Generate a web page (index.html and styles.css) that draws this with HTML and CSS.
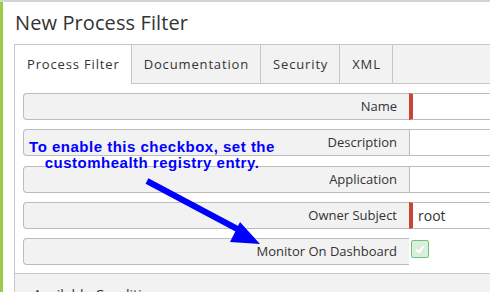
FILE: index.html
```html
<!DOCTYPE html>
<html lang="en">
  <head>
    <meta charset="UTF-8" />
    <title>New Process Filter</title>
    <link rel="stylesheet" href="styles.css">
  </head>
  <body>
    <div class="main">
      <h1 class="title">New Process Filter</h1>

      <div class="panel">
        <div class="tabs">
          <div class="tab active">Process Filter</div>
          <div class="tab">Documentation</div>
          <div class="tab">Security</div>
          <div class="tab">XML</div>
        </div>

        <div class="form">
          <div class="row">
            <div class="label">Name</div>
            <div class="field required"></div>
          </div>
          <div class="row">
            <div class="label">Description</div>
            <div class="field"></div>
          </div>
          <div class="row">
            <div class="label">Application</div>
            <div class="field"></div>
          </div>
          <div class="row">
            <div class="label">Owner Subject</div>
            <div class="field required">root</div>
          </div>
          <div class="row">
            <div class="label">Monitor On Dashboard</div>
            <div class="check-cell">
              <span class="checkbox">
                <svg width="12" height="12" viewBox="0 0 12 12">
                  <path d="M2 6.5 L5 9 L10 3" fill="none" stroke="#fff" stroke-width="2" />
                </svg>
              </span>
            </div>
          </div>
        </div>

        <div class="conditions">Available Conditions</div>
      </div>
    </div>

    <!-- annotation drawn over the screenshot -->
    <div class="note">To enable this checkbox, set the<br />customhealth registry entry.</div>
    <svg class="arrow" width="490" height="292" viewBox="0 0 490 292">
      <line x1="147" y1="181" x2="243" y2="232" stroke="#0000ff" stroke-width="6" />
      <polygon points="240,222 230,242 260,244" fill="#0000ff" />
    </svg>
  </body>
</html>
```

FILE: styles.css
```css
html,
body {
  height: 100%;
  overflow: hidden;
}

body {
  margin: 0;
  box-sizing: border-box;
  background-color: #fff;
  border-top: 2px solid #d4d4d4;
  font-family: "Open Sans", "Noto Sans", sans-serif;
  color: #333;
}

.main {
  border-left: 3px solid #9ccd4a;
  padding-left: 11px;
  height: 100%;
}

.title {
  margin: 0;
  padding: 8px 0 0 1px;
  height: 34px;
  font-size: 20px;
  font-weight: normal;
  line-height: 26px;
  letter-spacing: 0.1px;
  color: #333;
}

.panel {
  border: 1px solid #c6c6c6;
  border-right: none;
}

.tabs {
  display: flex;
  height: 38px;
  background-color: #f2f2f2;
  border-bottom: 1px solid #c6c6c6;
}

.tab {
  padding: 0 11px 0 12px;
  font-size: 13px;
  letter-spacing: 0.85px;
  line-height: 38px;
  border-right: 1px solid #c6c6c6;
  color: #333;
}

.tab.active {
  background-color: #fff;
  height: 39px;
}

.form {
  display: flex;
  flex-direction: column;
  gap: 9.25px;
  padding: 9px 0 8px 8px;
}

.row {
  display: flex;
  height: 27px;
}

.label {
  box-sizing: border-box;
  flex: 0 0 386px;
  height: 27px;
  background-color: #f2f2f2;
  border: 1px solid #bcbcbc;
  border-right: none;
  border-radius: 4px 0 0 4px;
  padding-right: 12px;
  text-align: right;
  font-size: 13px;
  line-height: 25px;
}

.field {
  box-sizing: border-box;
  flex: 1;
  height: 27px;
  border-top: 1px solid #bcbcbc;
  border-bottom: 1px solid #bcbcbc;
  border-left: 1px solid #bcbcbc;
  padding-left: 8px;
  font-size: 14px;
  line-height: 25px;
}

.field.required {
  border-left: 4px solid #cc4438;
  padding-left: 5px;
}

.check-cell {
  flex: 1;
  padding: 2px 0 0 2px;
}

.checkbox {
  display: flex;
  align-items: center;
  justify-content: center;
  box-sizing: border-box;
  width: 18px;
  height: 18px;
  background-color: #d9efdc;
  border: 1px solid #6cc37a;
  border-radius: 2px;
}

.conditions {
  background-color: #f2f2f2;
  border-top: 1px solid #c6c6c6;
  height: 40px;
  padding: 11px 0 0 18px;
  font-size: 14px;
}

.note {
  position: absolute;
  left: 24px;
  top: 139px;
  width: 256px;
  text-align: center;
  font-family: "Liberation Sans", Arial, sans-serif;
  font-weight: bold;
  font-size: 15px;
  letter-spacing: 0.5px;
  line-height: 16px;
  color: #0000ff;
}

.arrow {
  position: absolute;
  left: 0;
  top: 0;
}
```
